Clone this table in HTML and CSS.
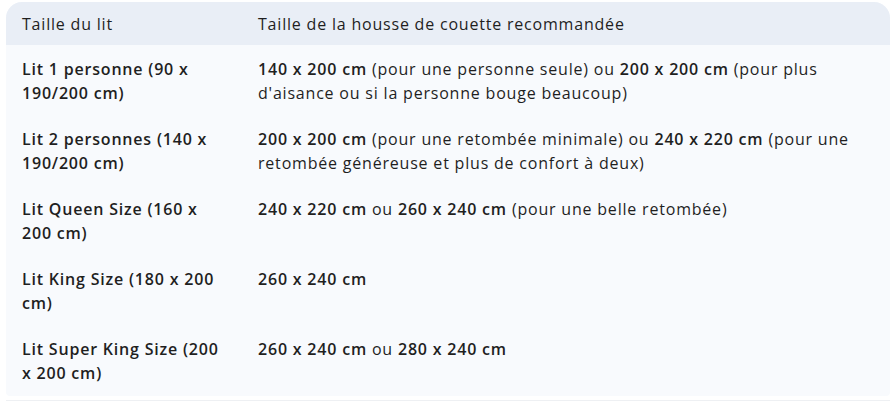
FILE: index.html
```html
<!DOCTYPE html>
<html lang="fr">
<head>
<meta charset="utf-8">
<link rel="stylesheet" href="styles.css">
</head>
<body>
<div class="wrap">
<table class="tbl">
  <thead>
    <tr><th class="c1">Taille du lit</th><th>Taille de la housse de couette recommandée</th></tr>
  </thead>
  <tbody>
    <tr><td class="c1">Lit 1 personne (90 x 190/200 cm)</td><td><b>140 x 200 cm</b> (pour une personne seule) ou <b>200 x 200 cm</b> (pour plus d'aisance ou si la personne bouge beaucoup)</td></tr>
    <tr><td class="c1">Lit 2 personnes (140 x 190/200 cm)</td><td><b>200 x 200 cm</b> (pour une retombée minimale) ou <b>240 x 220 cm</b> (pour une retombée généreuse et plus de confort à deux)</td></tr>
    <tr><td class="c1">Lit Queen Size (160 x 200 cm)</td><td><b>240 x 220 cm</b> ou <b>260 x 240 cm</b> (pour une belle retombée)</td></tr>
    <tr><td class="c1">Lit King Size (180 x 200 cm)</td><td><b>260 x 240 cm</b></td></tr>
    <tr class="last"><td class="c1">Lit Super King Size (200 x 200 cm)</td><td><b>260 x 240 cm</b> ou <b>280 x 240 cm</b></td></tr>
  </tbody>
</table>
<div class="rule"></div>
</div>
</body>
</html>
```
FILE: styles.css
```css
html, body { margin: 0; padding: 0; background: #ffffff; }
.wrap { padding: 2px 3px 0 6px; }
.tbl {
  width: 884px;
  border-collapse: separate;
  border-spacing: 0;
  font-family: "Open Sans", Roboto, sans-serif;
  font-size: 16px;
  line-height: 24px;
  letter-spacing: 0.8px;
  color: #1f1f1f;
  background: #f8fafd;
  border-radius: 16px 16px 4px 4px;
  overflow: hidden;
}
.tbl th {
  background: #e9eef6;
  font-weight: 400;
  text-align: left;
  padding: 10px 16px 9px;
  vertical-align: top;
}
.tbl td {
  padding: 12px 16px 10px;
  vertical-align: top;
  font-weight: 600;
}
.tbl td + td { font-weight: 400; }
.tbl td b { font-weight: 600; }
.tbl .last td { padding-bottom: 11px; }
.c1 { width: 204px; }
.rule { margin-top: 4px; height: 1px; background: #eef0f3; }
```
